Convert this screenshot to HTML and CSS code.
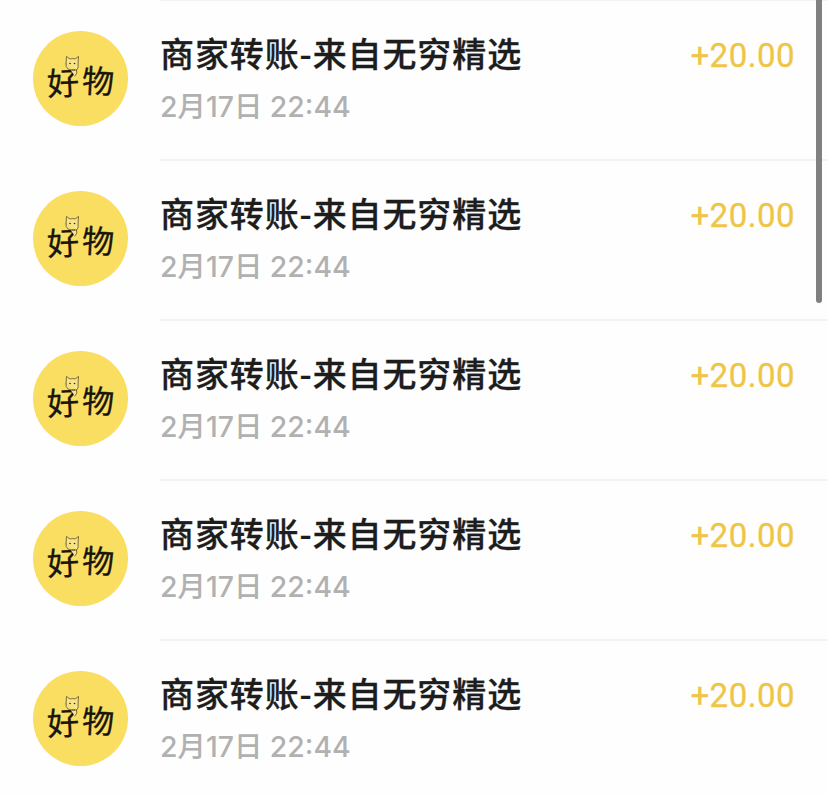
FILE: index.html
```html
<!DOCTYPE html>
<html lang="zh-CN">
<head>
    <meta charset="UTF-8">
    <meta name="viewport" content="width=device-width, initial-scale=1.0">
    <title>账单</title>
    <link rel="stylesheet" href="styles.css">
</head>
<body>
    <svg class="sprite" width="0" height="0" aria-hidden="true">
        <symbol id="cat" viewBox="0 0 16 22">
            <path d="M2 9 L2.5 1.5 L6 4 Q9 3 11 4 L14.5 1.5 L14 9 Q15 13 12.5 15 Q14 18 11 21 M2 9 Q1.5 12 4 14 Q7 16 12.5 15" fill="#f8e48a" stroke="#4a3f1e" stroke-width="0.7" stroke-linecap="round" stroke-linejoin="round"/>
            <circle cx="6" cy="8.5" r="0.8" fill="#2a2515"/>
            <circle cx="10.5" cy="8.5" r="0.8" fill="#2a2515"/>
        </symbol>
    </svg>
    <main class="list">
        <div class="row">
            <div class="avatar"><span class="logo"><span>好</span><svg class="cat"><use href="#cat"/></svg><span>物</span></span></div>
            <div class="row-body">
                <div class="info">
                    <div class="title">商家转账-来自无穷精选</div>
                    <div class="time">2月17日 22:44</div>
                </div>
                <div class="amount">+20.00</div>
            </div>
        </div>
        <div class="row">
            <div class="avatar"><span class="logo"><span>好</span><svg class="cat"><use href="#cat"/></svg><span>物</span></span></div>
            <div class="row-body">
                <div class="info">
                    <div class="title">商家转账-来自无穷精选</div>
                    <div class="time">2月17日 22:44</div>
                </div>
                <div class="amount">+20.00</div>
            </div>
        </div>
        <div class="row">
            <div class="avatar"><span class="logo"><span>好</span><svg class="cat"><use href="#cat"/></svg><span>物</span></span></div>
            <div class="row-body">
                <div class="info">
                    <div class="title">商家转账-来自无穷精选</div>
                    <div class="time">2月17日 22:44</div>
                </div>
                <div class="amount">+20.00</div>
            </div>
        </div>
        <div class="row">
            <div class="avatar"><span class="logo"><span>好</span><svg class="cat"><use href="#cat"/></svg><span>物</span></span></div>
            <div class="row-body">
                <div class="info">
                    <div class="title">商家转账-来自无穷精选</div>
                    <div class="time">2月17日 22:44</div>
                </div>
                <div class="amount">+20.00</div>
            </div>
        </div>
        <div class="row">
            <div class="avatar"><span class="logo"><span>好</span><svg class="cat"><use href="#cat"/></svg><span>物</span></span></div>
            <div class="row-body">
                <div class="info">
                    <div class="title">商家转账-来自无穷精选</div>
                    <div class="time">2月17日 22:44</div>
                </div>
                <div class="amount">+20.00</div>
            </div>
        </div>
    </main>
    <div class="scrollbar"></div>
</body>
</html>
```

FILE: styles.css
```css
/* General Styling */
html, body {
    height: 100%;
}

body {
    font-family: "Inter", "Noto Sans CJK SC", sans-serif;
    margin: 0;
    background: #fefefe;
    color: #1d1d1d;
    overflow: hidden;
    position: relative;
}

.sprite {
    position: absolute;
}

.list {
    margin-top: -1px;
}

/* Rows */
.row {
    display: flex;
    height: 160px;
}

.avatar {
    flex: none;
    width: 95px;
    height: 95px;
    margin: 32px 32px 0 33px;
    border-radius: 50%;
    background: #f9de62;
    display: flex;
    align-items: center;
    justify-content: center;
}

.logo {
    position: relative;
    display: flex;
    gap: 3px;
    margin-top: 5px;
    font-family: "Noto Sans CJK SC", sans-serif;
    font-size: 32px;
    line-height: 36px;
    font-weight: 400;
    color: #17150c;
    -webkit-text-stroke: 0.3px #17150c;
}

.logo span:first-child {
    transform: rotate(-3deg);
}

.logo span:last-child {
    transform: rotate(3deg) translateY(-2px);
}

/* cat sits on top of the first character */
.cat {
    position: absolute;
    left: 17px;
    top: -8px;
    width: 16px;
    height: 22px;
}

.row-body {
    flex: 1;
    display: flex;
    justify-content: space-between;
    padding: 0 33px 0 0;
    border-top: 2px solid #f3f3f3;
}

.title {
    margin-top: 31px;
    font-family: "Noto Sans CJK SC", sans-serif;
    font-size: 34px;
    line-height: 42px;
    font-weight: 500;
    letter-spacing: 0.9px;
    color: #1d1d1d;
    -webkit-text-stroke: 0.3px #1d1d1d;
}

.time {
    margin-top: 14px;
    font-family: "Inter", "Noto Sans CJK SC", sans-serif;
    font-size: 28.4px;
    line-height: 38px;
    font-weight: 500;
    color: #b1b1b1;
}

.amount {
    margin-top: 34px;
    font-family: "Roboto", sans-serif;
    font-size: 33px;
    line-height: 42px;
    font-weight: 400;
    letter-spacing: 0.5px;
    color: #efc545;
    -webkit-text-stroke: 0.3px #efc545;
}

/* Scrollbar overlay */
.scrollbar {
    position: absolute;
    top: 0;
    right: 6px;
    width: 6px;
    height: 303px;
    border-radius: 0 0 3px 3px;
    background: #808080;
}
```
